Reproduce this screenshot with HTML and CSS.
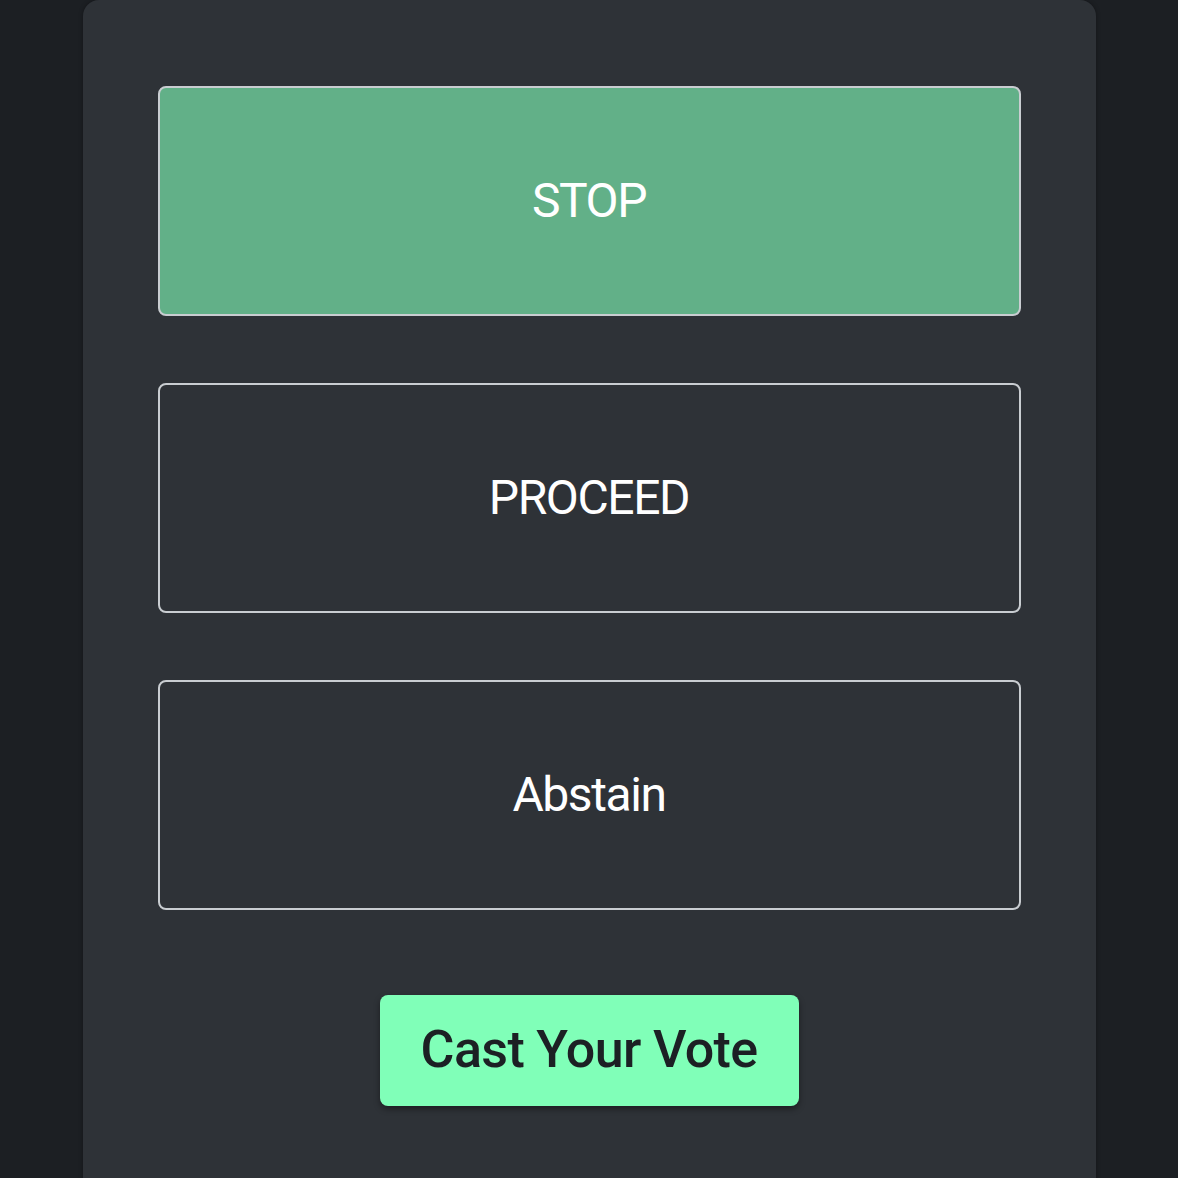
FILE: index.html
```html
<!DOCTYPE html>
<html lang="en">
<head>
<meta charset="utf-8">
<title>Vote</title>
<link rel="stylesheet" href="styles.css">
</head>
<body>
<main class="card">
  <div class="options">
    <button class="option selected">STOP</button>
    <button class="option">PROCEED</button>
    <button class="option">Abstain</button>
  </div>
  <div class="actions">
    <button class="cast">Cast Your Vote</button>
  </div>
</main>
</body>
</html>
```
FILE: styles.css
```css
html, body {
  margin: 0;
  padding: 0;
  background: #1c1f23;
  height: 100%;
  overflow: hidden;
}
body {
  font-family: Roboto, "Liberation Sans", sans-serif;
  display: flex;
  justify-content: center;
}
.card {
  width: 1013px;
  height: 1200px;
  box-sizing: border-box;
  background: #2e3237;
  border-radius: 16px 16px 0 0;
  box-shadow: 0 0 4px rgba(0,0,0,0.35);
  padding: 86px 75px 0;
  display: flex;
  flex-direction: column;
}
.options {
  display: flex;
  flex-direction: column;
  gap: 67px;
}
.option {
  height: 230px;
  box-sizing: border-box;
  border: 2px solid #c9cdd1;
  border-radius: 8px;
  background: #2e3237;
  color: #ffffff;
  font-family: Roboto, "Liberation Sans", sans-serif;
  font-size: 48px;
  font-weight: 400;
  letter-spacing: -1.4px;
  padding-bottom: 2px;
  cursor: pointer;
}
.option.selected {
  background: #62b088;
}
.actions {
  display: flex;
  justify-content: center;
  margin-top: 85px;
}
.cast {
  width: 419px;
  height: 111px;
  border: none;
  border-radius: 8px;
  background: #80ffb8;
  color: #1c2024;
  font-family: Roboto, "Liberation Sans", sans-serif;
  font-size: 52px;
  font-weight: 500;
  letter-spacing: -0.65px;
  padding-bottom: 4px;
  box-shadow: 0 3px 6px rgba(0,0,0,0.4);
  cursor: pointer;
}
```
